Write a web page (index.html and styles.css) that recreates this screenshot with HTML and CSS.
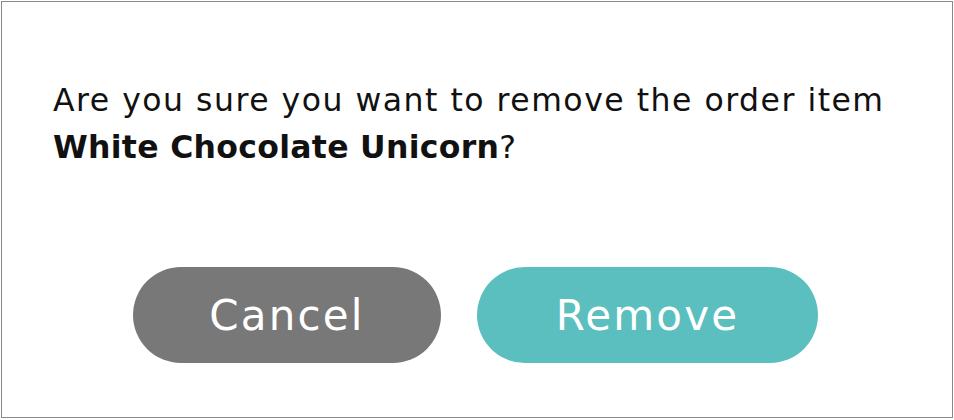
FILE: index.html
```html
<!DOCTYPE html>
<html>
<head>
<meta charset="utf-8">
<link rel="stylesheet" href="styles.css">
</head>
<body>
<div class="dialog">
  <p class="message">Are you sure you want to remove the order item<br><strong>White Chocolate Unicorn</strong>?</p>
  <div class="actions">
    <button class="btn btn-cancel">Cancel</button>
    <button class="btn btn-remove">Remove</button>
  </div>
</div>
</body>
</html>
```

FILE: styles.css
```css
html, body { margin: 0; padding: 0; background: #fff; }
body { padding: 1px; }
.dialog {
  box-sizing: border-box;
  width: 952px;
  height: 417px;
  border: 1px solid #888;
  padding: 75px 50px 0 51px;
  font-family: "DejaVu Sans", sans-serif;
  color: #111;
}
.message {
  margin: 0;
  font-size: 31.5px;
  line-height: 47px;
  letter-spacing: 1.5px;
  white-space: nowrap;
}
.message strong { font-weight: 700; letter-spacing: 0.3px; }
.actions {
  display: flex;
  justify-content: center;
  gap: 36px;
  margin-top: 96px;
  padding-right: 4px;
}
.btn {
  border: none;
  height: 96px;
  border-radius: 48px;
  color: #fff;
  font-family: "DejaVu Sans", sans-serif;
  font-size: 42px;
  letter-spacing: 2.2px;
  padding: 0;
}
.btn-cancel { width: 308px; background: #787878; }
.btn-remove { width: 341px; background: #5bbfbf; }
```
